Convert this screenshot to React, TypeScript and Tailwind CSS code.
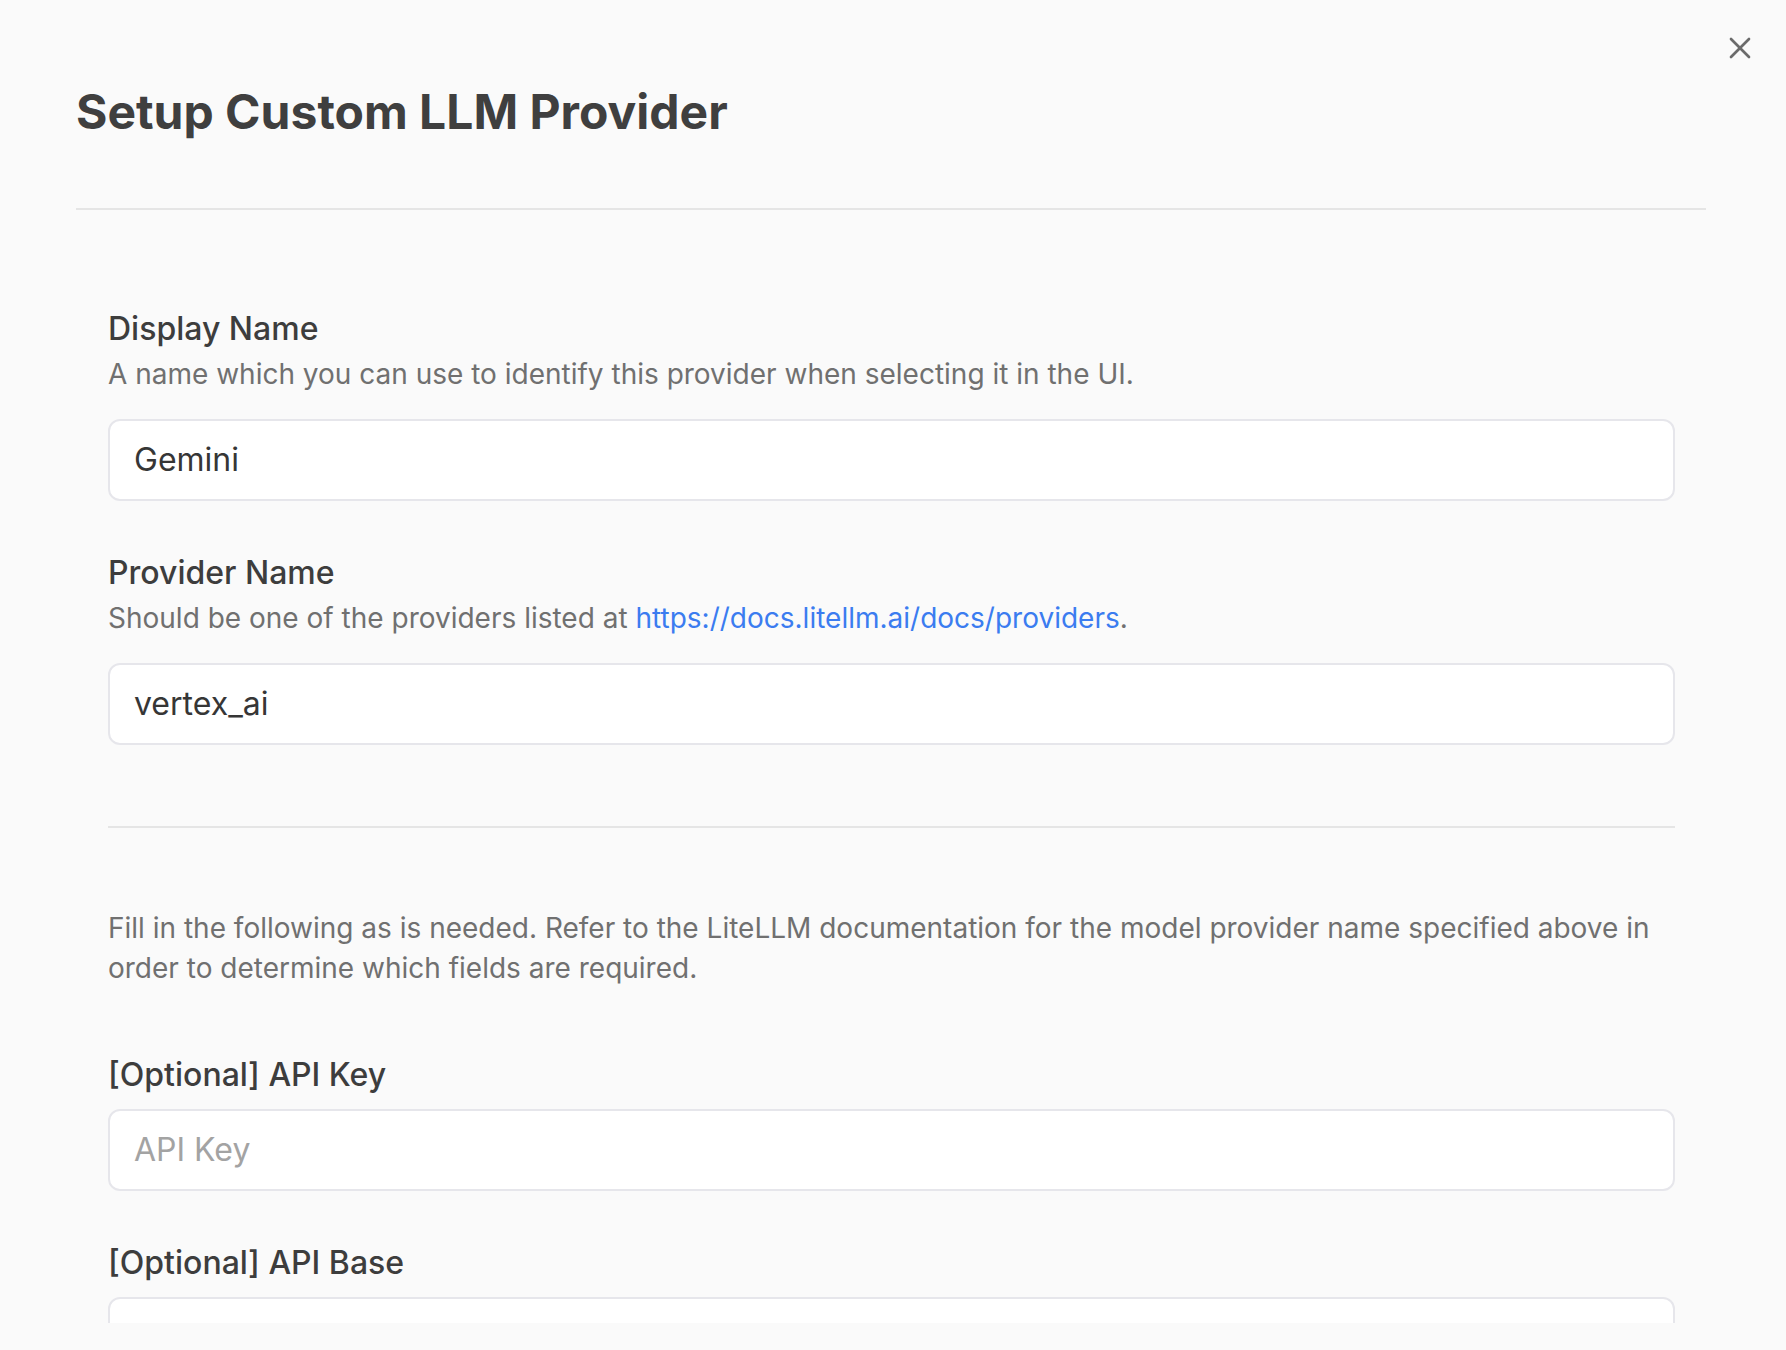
import { X } from "lucide-react";

const FONT = { fontFamily: "Inter, 'Noto Sans', sans-serif" };

function Field({
  label,
  description,
  value,
  placeholder,
  className = "",
}: {
  label: string;
  description?: React.ReactNode;
  value?: string;
  placeholder?: string;
  className?: string;
}) {
  return (
    <div className={className}>
      <div className="text-[32px] leading-[44px] font-medium text-[#3d3d3d]">{label}</div>
      {description && (
        <div className="mt-[3px] text-[28px] leading-[40px] text-[#707070]">{description}</div>
      )}
      <div
        className={`${description ? "mt-[25px]" : "mt-[12px]"} h-[82px] rounded-[12px] border-2 border-[#e6e6eb] bg-white px-[24px] flex items-center text-[32px] ${
          value ? "text-[#363636]" : "text-[#a3a3a3]"
        }`}
      >
        {value ?? placeholder}
      </div>
    </div>
  );
}

export default function App() {
  return (
    <div className="relative h-[1350px] w-full overflow-hidden bg-[#fafafa]" style={FONT}>
      <button className="absolute left-[1722px] top-[30px] text-[#6b6b6b]">
        <X size={36} strokeWidth={1.8} />
      </button>

      <div className="flex h-full flex-col pl-[76px] pr-[80px] pb-[27px]">
        {/* Header */}
        <div className="pt-[83px] pb-[67px] border-b-2 border-[#e5e5e5]">
          <h1 className="text-[48px] leading-[58px] font-bold text-[#3f3f3f]">
            Setup Custom LLM Provider
          </h1>
        </div>

        {/* Body */}
        <div className="flex-1 overflow-hidden pl-[32px] pr-[31px]">
          <Field
            className="mt-[97px]"
            label="Display Name"
            description="A name which you can use to identify this provider when selecting it in the UI."
            value="Gemini"
          />
          <Field
            className="mt-[50px]"
            label="Provider Name"
            description={
              <>
                Should be one of the providers listed at{" "}
                <a className="text-[#3b7cf0]">https://docs.litellm.ai/docs/providers</a>.
              </>
            }
            value="vertex_ai"
          />

          <div className="mt-[81px] h-[2px] bg-[#e5e5e5]" />

          <p className="mt-[80px] text-[28px] leading-[40px] text-[#707070]">
            Fill in the following as is needed. Refer to the LiteLLM documentation for the model provider
            name specified above in order to determine which fields are required.
          </p>

          <Field className="mt-[65px]" label="[Optional] API Key" placeholder="API Key" />
          <Field className="mt-[50px]" label="[Optional] API Base" value="" />
        </div>
      </div>
    </div>
  );
}
